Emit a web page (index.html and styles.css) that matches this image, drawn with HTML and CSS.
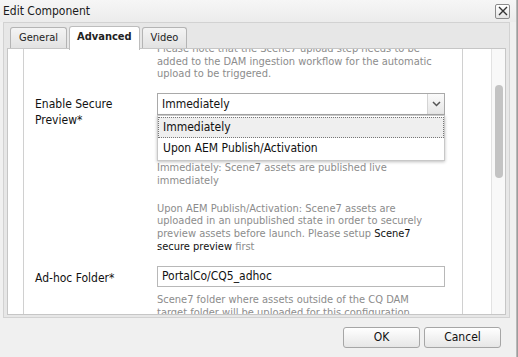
FILE: index.html
```html
<!DOCTYPE html>
<html>
<head lang="en">
    <meta charset="UTF-8">
    <title>Edit Component</title>
    <link rel="stylesheet" href="styles.css">
</head>
<body>
<div class="dialog">
    <div class="titlebar">
        <span class="title">Edit Component</span>
        <a href="javascript:;" class="close">
            <svg width="12" height="12" viewBox="0 0 12 12"><path d="M2 2 L10 10 M10 2 L2 10" stroke="#333" stroke-width="1.4" fill="none"/></svg>
        </a>
    </div>
    <div class="frame">
        <ul class="tabs">
            <li>General</li>
            <li class="active">Advanced</li>
            <li>Video</li>
        </ul>
        <div class="panel">
            <div class="scroll">
                <div class="form">
                    <p class="desc first">Please note that the Scene7 upload step needs to be<br>added to the DAM ingestion workflow for the automatic<br>upload to be triggered.</p>

                    <div class="row">
                        <label>Enable Secure<br>Preview*</label>
                        <div class="field">
                            <div class="select">
                                <span class="value">Immediately</span>
                                <span class="trigger">
                                    <svg width="9" height="6" viewBox="0 0 9 6"><path d="M1 1 L4.5 4.5 L8 1" stroke="#555" stroke-width="1.5" fill="none"/></svg>
                                </span>
                                <ul class="list">
                                    <li class="sel">Immediately</li>
                                    <li>Upon AEM Publish/Activation</li>
                                </ul>
                            </div>
                            <p class="desc gap">Immediately: Scene7 assets are published live<br>immediately</p>
                            <p class="desc para">Upon AEM Publish/Activation: Scene7 assets are<br>uploaded in an unpublished state in order to securely<br>preview assets before launch. Please setup <a href="javascript:;">Scene7</a><br><a href="javascript:;">secure preview</a> first</p>
                        </div>
                    </div>

                    <div class="row adhoc">
                        <label>Ad-hoc Folder*</label>
                        <div class="field">
                            <div class="input">PortalCo/CQ5_adhoc</div>
                            <p class="desc">Scene7 folder where assets outside of the CQ DAM<br>target folder will be uploaded for this configuration</p>
                        </div>
                    </div>
                </div>
            </div>
            <div class="scrollbar"><div class="thumb"></div></div>
        </div>
    </div>
    <div class="footer">
        <a href="javascript:;" class="btn">OK</a>
        <a href="javascript:;" class="btn">Cancel</a>
    </div>
</div>
</body>
</html>
```

FILE: styles.css
```css
body, div, ul, li, p, a, label {
    margin: 0;
    padding: 0;
}

ul, li {
    list-style: none;
}

a {
    text-decoration: none;
    color: #000;
}

body {
    width: 518px;
    height: 357px;
    overflow: hidden;
    background: #9c9c9c;
    font-family: "DejaVu Sans Condensed", "DejaVu Sans", sans-serif;
    font-size: 12px;
    color: #111;
}

.dialog {
    display: flex;
    flex-direction: column;
    width: 516px;
    height: 357px;
    background: #f0f0f0;
    border-right: 1px solid #b8b8b8;
}

.titlebar {
    display: flex;
    align-items: center;
    justify-content: space-between;
    height: 22px;
    padding: 0 6px 0 3px;
    background: linear-gradient(#f6f6f6, #ececec);
}

.title {
    font-size: 12px;
    color: #1a1a1a;
}

.close {
    display: flex;
    align-items: center;
    justify-content: center;
    width: 13px;
    height: 13px;
    border: 1px solid #8a8a8a;
    border-radius: 2px;
    background: linear-gradient(#ffffff, #e4e4e4);
}

.frame {
    display: flex;
    flex-direction: column;
    height: 294px;
    margin: 0 6px 0 3px;
    border: 1px solid #d2d2d2;
    background: #e7e7e7;
}

.tabs {
    display: flex;
    gap: 2px;
    height: 21px;
    margin-top: 4px;
    padding-left: 6px;
}

.tabs li {
    height: 20px;
    padding: 0 8px;
    line-height: 20px;
    font-size: 11px;
    color: #222;
    border: 1px solid #b4b4b4;
    border-bottom: none;
    border-radius: 3px 3px 0 0;
    background: linear-gradient(#f4f4f4, #e2e2e2);
}

.tabs li.active {
    position: relative;
    z-index: 1;
    height: 23px;
    margin-top: -1px;
    padding: 0 7px;
    font-weight: bold;
    background: #fff;
    border-color: #bdbdbd;
}

.panel {
    display: flex;
    flex: 1;
    margin: 0 3px 2px 3px;
    border: 1px solid #c6c6c6;
    background: #fff;
    overflow: hidden;
}

.scroll {
    flex: 1;
    overflow: hidden;
}

.form {
    width: 438px;
    height: 400px;
    margin: -6px 0 0 15px;
    border-left: 1px solid #d0d0d0;
    border-right: 1px solid #d0d0d0;
}

.desc {
    font-size: 11px;
    line-height: 12.7px;
    color: #8c8c8c;
    white-space: nowrap;
}

.desc a {
    color: #111;
}

.desc.first {
    padding-left: 133px;
}

.row {
    display: flex;
    padding-left: 11px;
}

.row label {
    width: 122px;
    padding-top: 3px;
    line-height: 16px;
    font-size: 12px;
    color: #111;
}

.field {
    width: 288px;
}

.row:nth-child(2) {
    margin-top: 12px;
}

.select {
    position: relative;
    display: flex;
    height: 20px;
    border: 1px solid #a9a9a9;
    background: #fff;
}

.select .value {
    flex: 1;
    padding-left: 4px;
    line-height: 20px;
}

.select .trigger {
    display: flex;
    align-items: center;
    justify-content: center;
    width: 16px;
    border-left: 1px solid #d4d4d4;
    background: linear-gradient(#fafafa, #e6e6e6);
}

.select .list {
    position: absolute;
    top: 21px;
    left: -1px;
    right: -1px;
    padding: 1px 0;
    border: 1px solid #c8c8c8;
    background: #fff;
    box-shadow: 0 1px 3px rgba(0, 0, 0, 0.25);
}

.select .list li {
    height: 19px;
    padding-left: 4px;
    line-height: 19px;
    border: 1px solid transparent;
}

.select .list li.sel {
    background: #efefef;
    border: 1px dotted #777;
}

.desc.gap {
    margin-top: 47px;
}

.desc.para {
    margin-top: 15px;
}

.row.adhoc {
    margin-top: 13px;
}

.row.adhoc label {
    padding-top: 4px;
}

.input {
    height: 19px;
    padding-left: 4px;
    line-height: 19px;
    border: 1px solid #b8b8b8;
    background: #fff;
}

.adhoc .desc {
    margin-top: 7px;
}

.scrollbar {
    width: 13px;
    border-left: 1px solid #e2e2e2;
    background: #f8f8f8;
}

.thumb {
    width: 8px;
    height: 93px;
    margin: 36px 0 0 3px;
    border-radius: 4px;
    background: #c3c3c3;
}

.footer {
    display: flex;
    justify-content: flex-end;
    gap: 4px;
    padding: 9px 15px 0 0;
}

.btn {
    width: 75px;
    height: 19px;
    line-height: 19px;
    text-align: center;
    font-size: 12px;
    color: #111;
    border: 1px solid #a6a6a6;
    border-radius: 3px;
    background: linear-gradient(#ffffff, #e6e6e6);
}
```
